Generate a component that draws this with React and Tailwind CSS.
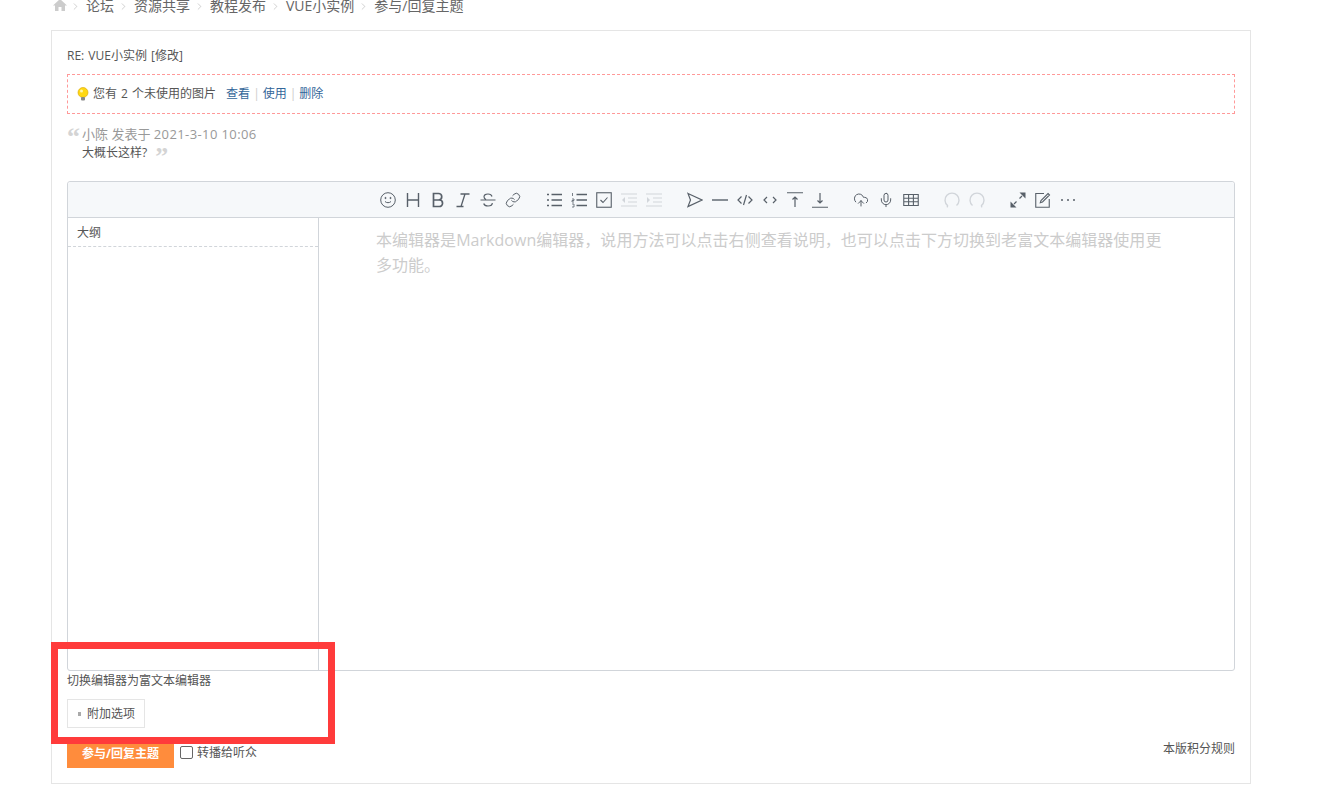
import React from 'react';
import { Link, CloudUpload, Mic, ChevronRight } from 'lucide-react';

const fontStack = { fontFamily: '"Open Sans", "Noto Sans CJK SC", sans-serif' };

const crumbs = ['论坛', '资源共享', '教程发布', 'VUE小实例', '参与/回复主题'];

// toolbar drawings, all on a 16px box
const Ico = ({ d, sw = 1.1, children }) => (
    <svg width="16" height="16" viewBox="0 0 16 16" fill="none" stroke="currentColor" strokeWidth={sw}>
        {d && <path d={d} />}
        {children}
    </svg>
);

const SmileIcon = () => (
    <Ico d="M5 9.500c1.500 1.600 4.500 1.600 6 0" sw={1}>
        <circle cx="8" cy="8" r="7.300" />
        <circle cx="5.500" cy="6" r="0.600" fill="currentColor" />
        <circle cx="10.500" cy="6" r="0.600" fill="currentColor" />
    </Ico>
);
const HeadingIcon = () => <Ico d="M2.500 1v14M13.500 1v14M2.500 8h11" sw={1.4} />;
const BoldIcon = () => <Ico d="M3.500 1.500h5a3.250 3.250 0 0 1 0 6.500h-5zM3.500 8h5.800a3.250 3.250 0 0 1 0 6.500H3.500z" sw={1.7} />;
const ItalicIcon = () => <Ico d="M5.500 2h9M1.500 14.500h7M10 2 6 14.500" sw={1.3} />;
const StrikeIcon = () => <Ico d="M12 4.500C11.500 2.500 9.800 2 8 2 5.800 2 4 3 4 4.800c0 1.200.8 2.200 2 2.700M12.300 11c0 2-2 3-4.300 3-2 0-3.700-.6-4.300-2.500M.5 8h15" sw={1.2} />;
const LinkIcon = () => <Link size={16} strokeWidth={1.5} />;
const ListIcon = () => <Ico d="M1 2.500h2M1 8h2M1 13.500h2M5.500 2.500H16M5.500 8H16M5.500 13.500H16" sw={1.4} />;
const OrderedIcon = () => (
    <Ico d="M5.500 2.500H16M5.500 8H16M5.500 13.500H16" sw={1.4}>
        <path d="M1.500 1v3M1 7h2v1.500H1V10h2M1 12h2v3H1" strokeWidth="0.8" />
    </Ico>
);
const CheckIcon = () => (
    <Ico d="M4.500 8l2.500 2.500 4.500-5">
        <rect x="0.750" y="0.750" width="14.500" height="14.500" />
    </Ico>
);
const OutdentIcon = () => (
    <Ico d="M0 2h16M7 6h9M7 10h9M0 14h16">
        <path d="M4 5 1 8l3 3z" fill="currentColor" stroke="none" />
    </Ico>
);
const IndentIcon = () => (
    <Ico d="M0 2h16M7 6h9M7 10h9M0 14h16">
        <path d="M1 5l3 3-3 3z" fill="currentColor" stroke="none" />
    </Ico>
);
const SendIcon = () => <Ico d="M1 1.500 15 8 1 14.500 3.500 8z" sw={1.2} />;
const LineIcon = () => <Ico d="M0 8h16" sw={1.4} />;
const CodeIcon = () => <Ico d="M4.500 4.500 1 8l3.500 3.500M11.500 4.500 15 8l-3.500 3.500M9.500 3l-3 10" sw={1.2} />;
const InlineIcon = () => <Ico d="M5 5 2 8l3 3M11 5l3 3-3 3" sw={1.2} />;
const TopIcon = () => <Ico d="M0 .750h16M8 15V5M5.500 7.500 8 5l2.500 2.500" sw={1.2} />;
const BottomIcon = () => <Ico d="M0 15.250h16M8 1v10M5.500 8.500 8 11l2.500-2.500" sw={1.2} />;
const UploadIcon = () => <CloudUpload size={16} strokeWidth={1.5} />;
const MicIcon = () => <Mic size={16} strokeWidth={1.5} />;
const TableIcon = () => <Ico d="M.75 2.500h14.500v11H.75zM.75 6.200h14.500M.75 9.800h14.500M5.600 2.500v11M10.400 2.500v11" />;
const UndoIcon = () => <Ico d="M3.500 13.500a7 7 0 1 1 9 0M1.800 11.500l1.700 2-.2 1.800" sw={1.4} />;
const RedoIcon = () => <Ico d="M3.500 13.500a7 7 0 1 1 9 0M14.200 11.500l-1.700 2 .2 1.800" sw={1.4} />;
const ExpandIcon = () => (
    <Ico d="M12 4 9.500 6.500M4 12l2.500-2.500" sw={1.2}>
        <path d="M9.500.5h6v6zM.5 15.500v-6l6 6z" fill="currentColor" stroke="none" />
    </Ico>
);
const EditIcon = () => <Ico d="M9 1.500H.75v13.750h13.500V7M13 1.500 14.500 3l-7 7-2.200.7.700-2.200z" />;
const MoreIcon = () => (
    <Ico>
        <circle cx="2" cy="8" r="1" fill="currentColor" stroke="none" />
        <circle cx="8" cy="8" r="1" fill="currentColor" stroke="none" />
        <circle cx="14" cy="8" r="1" fill="currentColor" stroke="none" />
    </Ico>
);

const toolbarGroups = [
    [SmileIcon, HeadingIcon, BoldIcon, ItalicIcon, StrikeIcon, LinkIcon],
    [ListIcon, OrderedIcon, CheckIcon, { icon: OutdentIcon, off: true }, { icon: IndentIcon, off: true }],
    [SendIcon, LineIcon, CodeIcon, InlineIcon, TopIcon, BottomIcon],
    [UploadIcon, MicIcon, TableIcon],
    [{ icon: UndoIcon, off: true }, { icon: RedoIcon, off: true }],
    [ExpandIcon, EditIcon, MoreIcon],
];

const BulbIcon = () => (
    <svg viewBox="0 0 12 14" className="w-[12px] h-[14px]">
        <circle cx="6" cy="5.500" r="5" fill="#ffd814" stroke="#d9a400" strokeWidth="0.6" />
        <circle cx="4.500" cy="4" r="1.500" fill="#fff6b0" />
        <rect x="4" y="10" width="4" height="3.500" rx="1" fill="#888" />
    </svg>
);

const QuoteMark = ({ children }) => (
    <span className="text-[#d4d4d4] font-bold text-[26px] leading-none" style={{ fontFamily: '"Liberation Serif", serif' }}>
        {children}
    </span>
);

const App = () => {
    return (
        <div className="min-h-[796px] bg-white overflow-hidden" style={fontStack}>
            {/* Breadcrumb */}
            <div className="-mt-[5px] h-[35px] pl-[53px] flex items-start text-[14px] leading-[22px] text-[#666]">
                <svg viewBox="0 0 14 12" className="w-[14px] h-[12px] mt-[4px] mr-[1px] text-[#ccc]" fill="currentColor">
                    <path d="M7 0 0 6.500h2V12h3.500V8h3v4H12V6.500h2z" />
                </svg>
                {crumbs.map((c) => (
                    <React.Fragment key={c}>
                        <ChevronRight size={11} strokeWidth={1} className="mx-[2px] mt-[6px] text-[#999]" />
                        <span className="ml-[3px] mr-[2px]">{c}</span>
                    </React.Fragment>
                ))}
            </div>

            {/* Card */}
            <div className="relative ml-[51px] w-[1200px] h-[754px] border border-[#e5e5e5] px-[15px] text-[12px] text-[#555]">
                <div className="pt-[16px] h-[43px] leading-[18px] [word-spacing:1px]">RE: VUE小实例 [修改]</div>

                <div className="h-[40px] border border-dashed border-[#f99] flex items-center pl-[9px]">
                    <BulbIcon />
                    <span className="ml-[4px] [word-spacing:1px]">您有 2 个未使用的图片</span>
                    <a className="ml-[10px] text-[#369]">查看</a>
                    <span className="mx-[3px] text-[#ccc]">|</span>
                    <a className="text-[#369]">使用</a>
                    <span className="mx-[3px] text-[#ccc]">|</span>
                    <a className="text-[#369]">删除</a>
                </div>

                {/* Quote */}
                <div className="h-[67px] pt-[11px]">
                    <div className="flex items-start h-[19px] text-[13px] leading-[18px] text-[#999]">
                        <span className="w-[15px] h-[18px] -mt-[1px]"><QuoteMark>“</QuoteMark></span>
                        <span>小陈 发表于 <span className="tracking-[0.4px]">2021-3-10 10:06</span></span>
                    </div>
                    <div className="pl-[15px] flex items-start leading-[18px]">
                        <span>大概长这样?</span>
                        <span className="ml-[8px] h-[18px]"><QuoteMark>”</QuoteMark></span>
                    </div>
                </div>

                {/* Editor */}
                <div className="h-[490px] border border-[#d1d5da] rounded-[3px] flex flex-col">
                    <div className="h-[36px] shrink-0 bg-[#f6f8fa] border-b border-[#d1d5da] rounded-t-[3px] flex items-center pl-[307px] gap-[16px]">
                        {toolbarGroups.map((group, i) => (
                            <div key={i} className="flex">
                                {group.map((item, j) => {
                                    const Icon = item.icon || item;
                                    return (
                                        <span key={j} className={`w-[25px] flex justify-center ${item.off ? 'text-[#d1d5da]' : 'text-[#586069]'}`}>
                                            <Icon />
                                        </span>
                                    );
                                })}
                            </div>
                        ))}
                    </div>
                    <div className="flex flex-1">
                        <div className="w-[251px] shrink-0 border-r border-[#d1d5da]">
                            <div className="h-[29px] pl-[9px] leading-[29px] border-b border-dashed border-[#d1d5da]">大纲</div>
                        </div>
                        <div className="pl-[57px] pt-[10px] w-[852px] text-[16px] leading-[25px] text-[#ccc] tracking-[0.03px]">
                            本编辑器是Markdown编辑器，说用方法可以点击右侧查看说明，也可以点击下方切换到老富文本编辑器使用更多功能。
                        </div>
                    </div>
                </div>

                <div className="mt-[1px] leading-[18px]">切换编辑器为富文本编辑器</div>

                <div className="mt-[9px] w-[78px] h-[29px] border border-[#e5e5e5] flex items-center pl-[10px]">
                    <span className="w-[3px] h-[4px] bg-[#aaa] mr-[6px]" />
                    附加选项
                </div>

                {/* Footer row */}
                <div className="mt-[11px] flex items-start justify-between">
                    <div className="flex items-center">
                        <button className="w-[107px] h-[29px] bg-[#ff8c3c] text-white font-bold text-[12px]">参与/回复主题</button>
                        <span className="ml-[6px] -mt-[2px] w-[13px] h-[13px] rounded-[2px] border border-[#666] bg-white" />
                        <span className="ml-[4px] -mt-[2px]">转播给听众</span>
                    </div>
                    <span className="mt-[1px] leading-[18px]">本版积分规则</span>
                </div>
            </div>

            {/* Red annotation drawn over the screenshot */}
            <div className="absolute left-[51px] top-[642px] w-[284px] h-[102px] border-[7px] border-[#ff3b3b]" />
        </div>
    );
};

export default App;
